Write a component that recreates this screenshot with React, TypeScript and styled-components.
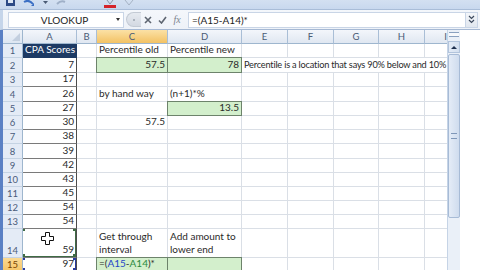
import React from 'react';
import styled, { createGlobalStyle, css } from 'styled-components';

const GlobalStyle = createGlobalStyle`
  html, body {
    margin: 0;
    padding: 0;
    overflow: hidden;
    background: #fff;
  }
  body {
    font-family: Lato, "Liberation Sans", sans-serif;
  }
  * { box-sizing: border-box; }
`;

const Window = styled.div`
  width: 480px;
  height: 270px;
  display: flex;
  flex-direction: column;
  overflow: hidden;
  background: #fff;
`;

const QuickBar = styled.div`
  height: 10px;
  flex: none;
  display: flex;
  align-items: flex-start;
  gap: 8px;
  padding-left: 6px;
  background: linear-gradient(#d3e0f1, #c8d8ee);
  border-bottom: 1px solid #a9bdd8;
`;

const FormulaBar = styled.div`
  height: 20px;
  flex: none;
  display: flex;
  align-items: center;
  padding: 2px 2px 2px 5px;
  background: linear-gradient(#f4f7fb, #eef2f8);
  border-left: 3px solid #c5d5ea;
  border-bottom: 1px solid #a5b8d3;
`;

const NameBox = styled.div`
  width: 116px;
  height: 16px;
  flex: none;
  display: flex;
  align-items: center;
  background: #fff;
  border: 1px solid #c9d5e6;
  font-size: 10px;
  color: #222;
`;

const NameText = styled.span`
  flex: 1;
  text-align: center;
  padding-left: 4px;
`;

const DropArrow = styled.span`
  width: 0;
  height: 0;
  margin-right: 3px;
  border-left: 2px solid transparent;
  border-right: 2px solid transparent;
  border-top: 3px solid #333;
`;

const Grip = styled.div`
  width: 15px;
  height: 15px;
  margin-left: 2px;
  flex: none;
  border-radius: 8px 0 0 8px;
  background: linear-gradient(#e6eaf0, #d3d9e2);
  border: 1px solid #c3cad4;
  border-right: none;
  display: flex;
  align-items: center;
  justify-content: center;
  &::after {
    content: '';
    width: 2px;
    height: 2px;
    background: #9aa3ae;
    border-radius: 1px;
  }
`;

const IconButton = styled.span`
  width: 14px;
  height: 16px;
  flex: none;
  display: flex;
  align-items: center;
  justify-content: center;
  color: #6c7480;
`;

const FxLabel = styled.span`
  width: 16px;
  flex: none;
  text-align: center;
  font-family: "Liberation Serif", serif;
  font-style: italic;
  font-size: 10px;
  color: #7b848f;
`;

const FormulaInput = styled.div`
  flex: 1;
  height: 16px;
  margin-left: 3px;
  display: flex;
  align-items: center;
  justify-content: space-between;
  background: #fff;
  border: 1px solid #c9d5e6;
  padding-left: 3px;
  font-size: 10px;
  color: #222;
`;

const ExpandBox = styled.span`
  width: 12px;
  height: 14px;
  display: flex;
  align-items: center;
  justify-content: center;
  background: linear-gradient(#f3f6fa, #e1e7ef);
  border-left: 1px solid #c9d5e6;
`;

const Main = styled.div`
  flex: 1;
  display: flex;
  min-height: 0;
  border-left: 3px solid #5a80c4;
`;

const colWidths = [20, 54, 20, 71, 74, 46, 46, 45, 46, 42];
const rowHeights = [14, 14, 15, 14, 15, 14, 14, 14, 15, 14, 14, 14, 14, 14, 29, 14];

const Grid = styled.div`
  display: grid;
  grid-template-columns: ${colWidths.map((w) => `${w}px`).join(' ')};
  grid-template-rows: ${rowHeights.map((h) => `${h}px`).join(' ')};
  align-content: start;
  width: 444px;
  overflow: hidden;
`;

const Corner = styled.div`
  background: linear-gradient(#eef2f8, #dde6f2);
  border-right: 1px solid #9eb6ce;
  border-bottom: 1px solid #9eb6ce;
  position: relative;
  &::after {
    content: '';
    position: absolute;
    right: 2px;
    bottom: 2px;
    border-left: 8px solid transparent;
    border-bottom: 8px solid #c3cfdf;
  }
`;

const ColHead = styled.div<{ $active?: boolean }>`
  display: flex;
  align-items: center;
  justify-content: center;
  font-size: 9.5px;
  color: #4a5b75;
  border-right: 1px solid #a9bed6;
  border-bottom: 1px solid #9eb6ce;
  background: ${(p) =>
    p.$active
      ? 'linear-gradient(#fbe1a6, #f3c264)'
      : 'linear-gradient(#f3f6fb, #e0e7f1)'};
`;

const RowHead = styled.div<{ $active?: boolean }>`
  display: flex;
  align-items: flex-end;
  justify-content: center;
  padding-bottom: 1px;
  font-size: 9.5px;
  color: ${(p) => (p.$active ? '#7a4400' : '#4a5b7a')};
  border-right: 1px solid #9eb6ce;
  border-bottom: 1px solid #c5d3e3;
  background: ${(p) => (p.$active ? 'linear-gradient(#fbd992, #f5c567)' : '#e4ebf6')};
`;

type Fill = 'navy' | 'green' | undefined;

const Cell = styled.div<{
  $fill?: Fill;
  $align?: 'left' | 'right';
  $boxed?: boolean;
  $span?: number;
  $wrap?: boolean;
  $dense?: boolean;
}>`
  position: relative;
  display: flex;
  align-items: flex-end;
  justify-content: ${(p) => (p.$align === 'right' ? 'flex-end' : 'flex-start')};
  padding: 0 2px 1px 2px;
  font-size: 10px;
  line-height: 13px;
  color: #2a2a2a;
  white-space: ${(p) => (p.$wrap ? 'normal' : 'nowrap')};
  overflow: hidden;
  border-right: 1px solid #dadfe6;
  border-bottom: 1px solid #dadfe6;
  ${(p) => p.$span && css`grid-column: span ${p.$span};`}
  ${(p) =>
    p.$dense &&
    css`
      font-size: 9.2px;
      letter-spacing: -0.2px;
    `}
  ${(p) =>
    p.$boxed &&
    css`
      border-right: 1px solid #4c4c4c;
      border-bottom: 1px solid #7a7a7a;
    `}
  ${(p) =>
    p.$fill === 'navy' &&
    css`
      background: #1d3a64;
      color: #fff;
      border-color: #1d3a64;
    `}
  ${(p) =>
    p.$fill === 'green' &&
    css`
      background: #d3efcc;
      border: 1px solid #6d836b;
      margin: -1px 0 0 -1px;
    `}
`;

const Ref = styled.span<{ $color: string }>`
  color: ${(p) => p.$color};
`;

const Marker = styled.div<{ $color: string }>`
  position: absolute;
  inset: -1px 0 0 -1px;
  border: 1px solid ${(p) => p.$color};
  pointer-events: none;
`;

const Handle = styled.span<{ $color: string; $x: 'l' | 'r'; $y: 't' | 'b' }>`
  position: absolute;
  width: 4px;
  height: 4px;
  background: ${(p) => p.$color};
  ${(p) => (p.$x === 'l' ? 'left: -2px;' : 'right: -2px;')}
  ${(p) => (p.$y === 't' ? 'top: -2px;' : 'bottom: -2px;')}
`;

const CursorIcon = styled.svg`
  position: absolute;
  left: 18px;
  top: 3px;
`;

const VScroll = styled.div`
  width: 13px;
  flex: none;
  display: flex;
  flex-direction: column;
  background: #eaf0f8;
  border-left: 1px solid #c6d4e6;
`;

const SplitBox = styled.div`
  height: 5px;
  margin: 2px 1px 0;
  border-top: 1px solid #8aa1c0;
  border-bottom: 1px solid #8aa1c0;
  background: #f7f9fc;
`;

const ScrollButton = styled.div`
  height: 12px;
  margin-top: 4px;
  display: flex;
  align-items: center;
  justify-content: center;
  background: linear-gradient(90deg, #e3ebf6, #d3dfef);
  border: 1px solid #b2c4dc;
  &::after {
    content: '';
    border-left: 3px solid transparent;
    border-right: 3px solid transparent;
    border-bottom: 3px solid #1d2f4e;
  }
`;

const Thumb = styled.div`
  height: 164px;
  margin: 1px 0 0;
  display: flex;
  align-items: center;
  justify-content: center;
  background: linear-gradient(90deg, #e4ecf7, #cfdcee);
  border: 1px solid #a7bbd6;
  border-radius: 2px;
  &::after {
    content: '';
    width: 6px;
    height: 4px;
    border-top: 1px solid #7e96b8;
    border-bottom: 1px solid #7e96b8;
  }
`;

type CellDef = {
  text?: React.ReactNode;
  fill?: Fill;
  align?: 'left' | 'right';
  span?: number;
  wrap?: boolean;
  dense?: boolean;
  marker?: string;
  cursor?: boolean;
};

const colLetters = ['A', 'B', 'C', 'D', 'E', 'F', 'G', 'H', 'I'];
const scores = [7, 17, 26, 27, 30, 38, 39, 42, 43, 45, 54, 54, 59, 97];

const cells: Record<string, CellDef> = {
  A1: { text: 'CPA Scores', fill: 'navy' },
  C1: { text: 'Percentile old' },
  D1: { text: 'Percentile new' },
  C2: { text: '57.5', fill: 'green', align: 'right' },
  D2: { text: '78', fill: 'green', align: 'right' },
  E2: { text: 'Percentile is a location that says 90% below and 10%', span: 5, dense: true },
  C4: { text: 'by hand way' },
  D4: { text: '(n+1)*%' },
  D5: { text: '13.5', fill: 'green', align: 'right' },
  C6: { text: '57.5', align: 'right' },
  C14: { text: 'Get through interval', wrap: true },
  D14: { text: 'Add amount to lower end', wrap: true },
  C15: {
    text: (
      <>
        =(<Ref $color="#2446c8">A15</Ref>-<Ref $color="#2b8a3e">A14</Ref>)*
      </>
    ),
    fill: 'green',
  },
  D15: { fill: 'green' },
};

scores.forEach((n, i) => {
  const key = `A${i + 2}`;
  cells[key] = { text: String(n), align: 'right' };
});
cells.A14 = { ...cells.A14, marker: '#3f6b45', cursor: true };
cells.A15 = { ...cells.A15, marker: '#2a3a9c' };

function renderRow(r: number) {
  const out: React.ReactNode[] = [
    <RowHead key={`h${r}`} $active={r === 15}>
      {r}
    </RowHead>,
  ];
  let skip = 0;
  colLetters.forEach((c) => {
    if (skip > 0) {
      skip -= 1;
      return;
    }
    const def = cells[`${c}${r}`] || {};
    if (def.span) skip = def.span - 1;
    out.push(
      <Cell
        key={`${c}${r}`}
        $fill={def.fill}
        $align={def.align}
        $span={def.span}
        $wrap={def.wrap}
        $dense={def.dense}
        $boxed={c === 'A' && r > 1}
      >
        {def.text}
        {def.cursor && (
          <CursorIcon width="13" height="13" viewBox="0 0 13 13">
            <path
              d="M4.5 0.5h4v4h4v4h-4v4h-4v-4h-4v-4h4z"
              fill="#fff"
              stroke="#111"
              strokeWidth="1"
            />
          </CursorIcon>
        )}
        {def.marker && (
          <Marker $color={def.marker}>
            <Handle $color={def.marker} $x="l" $y="t" />
            <Handle $color={def.marker} $x="r" $y="t" />
            <Handle $color={def.marker} $x="l" $y="b" />
            <Handle $color={def.marker} $x="r" $y="b" />
          </Marker>
        )}
      </Cell>
    );
  });
  return out;
}

const QuickIcons = () => (
  <>
    <svg width="9" height="6" viewBox="0 0 9 6">
      <rect x="0" y="0" width="9" height="6" fill="#2c4a86" />
      <rect x="2" y="0" width="5" height="3" fill="#dce6f4" />
    </svg>
    <svg width="12" height="7" viewBox="0 0 12 7">
      <path d="M1 2 Q6 -1 10 4" stroke="#3b6fc4" strokeWidth="2" fill="none" />
      <path d="M8 6 L11 3 L11 6 Z" fill="#3b6fc4" />
    </svg>
    <svg width="5" height="5" viewBox="0 0 5 5">
      <path d="M0 1 L5 1 L2.5 4 Z" fill="#4a5b75" />
    </svg>
    <svg width="10" height="7" viewBox="0 0 10 7">
      <path d="M1 4 Q5 0 9 2" stroke="#9fb0c8" strokeWidth="2" fill="none" />
    </svg>
    <span style={{ width: 22 }} />
    <svg width="12" height="8" viewBox="0 0 12 8">
      <path d="M3 0 L6 4 L9 0" stroke="#8b97a8" strokeWidth="1" fill="none" />
      <rect x="0" y="5" width="12" height="3" fill="#d4242b" />
    </svg>
    <svg width="10" height="7" viewBox="0 0 10 7">
      <path d="M1 0 L5 5 L9 0" stroke="#a5b2c4" strokeWidth="1" fill="none" />
    </svg>
  </>
);

export default function App() {
  return (
    <Window>
      <GlobalStyle />
      <QuickBar>
        <QuickIcons />
      </QuickBar>
      <FormulaBar>
        <NameBox>
          <NameText>VLOOKUP</NameText>
          <DropArrow />
        </NameBox>
        <Grip />
        <IconButton>
          <svg width="8" height="8" viewBox="0 0 8 8">
            <path d="M1 1 L7 7 M7 1 L1 7" stroke="#5d6570" strokeWidth="1.6" />
          </svg>
        </IconButton>
        <IconButton>
          <svg width="9" height="8" viewBox="0 0 9 8">
            <path d="M1 4.5 L3.5 7 L8 1" stroke="#5d6570" strokeWidth="1.6" fill="none" />
          </svg>
        </IconButton>
        <FxLabel>fx</FxLabel>
        <FormulaInput>
          <span>=(A15-A14)*</span>
          <ExpandBox>
            <svg width="7" height="9" viewBox="0 0 7 9">
              <path d="M1 1 L3.5 3.5 L6 1 M1 5 L3.5 7.5 L6 5" stroke="#3d4a5e" strokeWidth="1.2" fill="none" />
            </svg>
          </ExpandBox>
        </FormulaInput>
      </FormulaBar>
      <Main>
        <Grid>
          <Corner />
          {colLetters.map((c) => (
            <ColHead key={c} $active={c === 'C'}>
              {c}
            </ColHead>
          ))}
          {Array.from({ length: 15 }, (_, i) => renderRow(i + 1))}
        </Grid>
        <VScroll>
          <SplitBox />
          <ScrollButton />
          <Thumb />
        </VScroll>
      </Main>
    </Window>
  );
}
